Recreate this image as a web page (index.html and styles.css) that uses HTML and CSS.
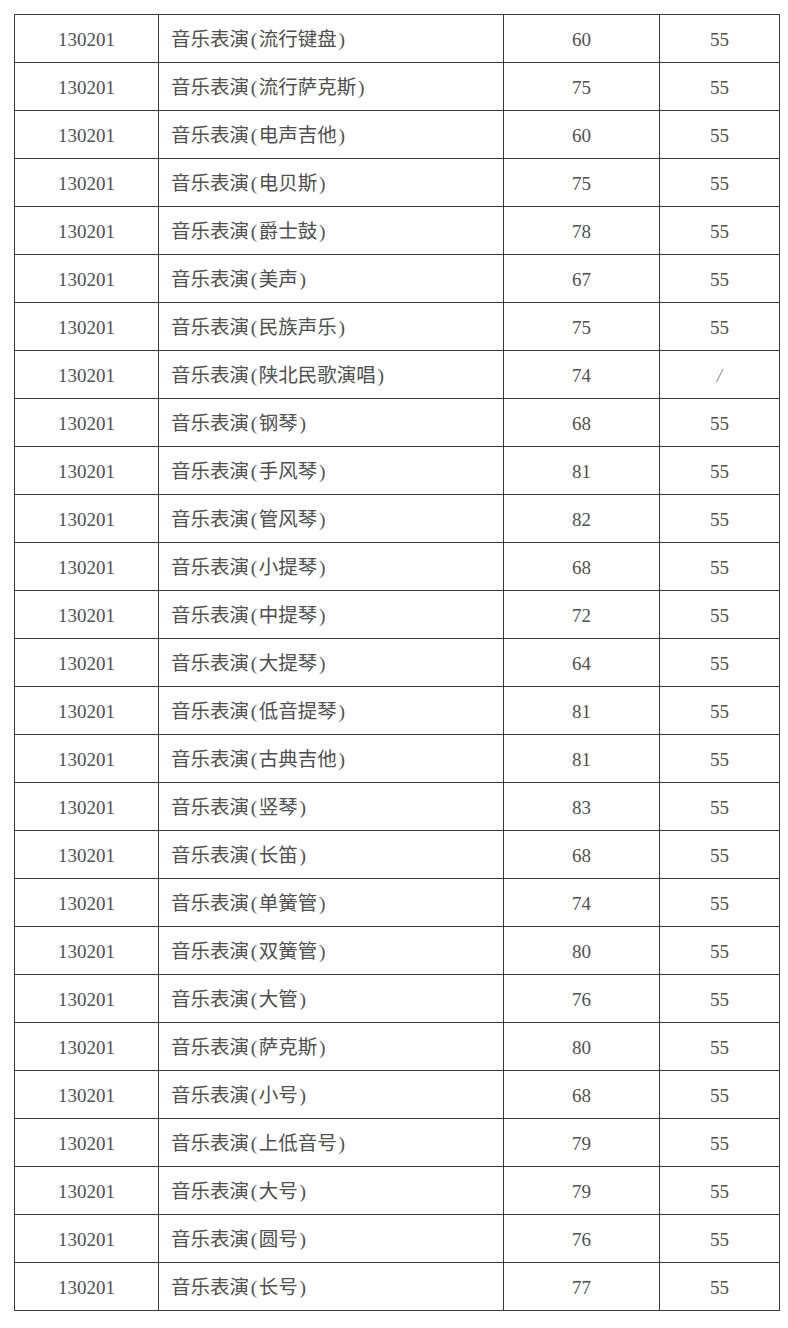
FILE: index.html
```html
<!DOCTYPE html>
<html lang="zh-CN">
<head>
<meta charset="utf-8">
<title>音乐表演</title>
<link rel="stylesheet" href="styles.css">
</head>
<body>
<table class="score-table">
<colgroup>
<col class="c-code"><col class="c-name"><col class="c-a"><col class="c-b">
</colgroup>
<tbody>
<tr><td class="code">130201</td><td class="name">音乐表演<span class="p">(</span>流行键盘<span class="p">)</span></td><td class="num">60</td><td class="num">55</td></tr>
<tr><td class="code">130201</td><td class="name">音乐表演<span class="p">(</span>流行萨克斯<span class="p">)</span></td><td class="num">75</td><td class="num">55</td></tr>
<tr><td class="code">130201</td><td class="name">音乐表演<span class="p">(</span>电声吉他<span class="p">)</span></td><td class="num">60</td><td class="num">55</td></tr>
<tr><td class="code">130201</td><td class="name">音乐表演<span class="p">(</span>电贝斯<span class="p">)</span></td><td class="num">75</td><td class="num">55</td></tr>
<tr><td class="code">130201</td><td class="name">音乐表演<span class="p">(</span>爵士鼓<span class="p">)</span></td><td class="num">78</td><td class="num">55</td></tr>
<tr><td class="code">130201</td><td class="name">音乐表演<span class="p">(</span>美声<span class="p">)</span></td><td class="num">67</td><td class="num">55</td></tr>
<tr><td class="code">130201</td><td class="name">音乐表演<span class="p">(</span>民族声乐<span class="p">)</span></td><td class="num">75</td><td class="num">55</td></tr>
<tr><td class="code">130201</td><td class="name">音乐表演<span class="p">(</span>陕北民歌演唱<span class="p">)</span></td><td class="num">74</td><td class="num slash">/</td></tr>
<tr><td class="code">130201</td><td class="name">音乐表演<span class="p">(</span>钢琴<span class="p">)</span></td><td class="num">68</td><td class="num">55</td></tr>
<tr><td class="code">130201</td><td class="name">音乐表演<span class="p">(</span>手风琴<span class="p">)</span></td><td class="num">81</td><td class="num">55</td></tr>
<tr><td class="code">130201</td><td class="name">音乐表演<span class="p">(</span>管风琴<span class="p">)</span></td><td class="num">82</td><td class="num">55</td></tr>
<tr><td class="code">130201</td><td class="name">音乐表演<span class="p">(</span>小提琴<span class="p">)</span></td><td class="num">68</td><td class="num">55</td></tr>
<tr><td class="code">130201</td><td class="name">音乐表演<span class="p">(</span>中提琴<span class="p">)</span></td><td class="num">72</td><td class="num">55</td></tr>
<tr><td class="code">130201</td><td class="name">音乐表演<span class="p">(</span>大提琴<span class="p">)</span></td><td class="num">64</td><td class="num">55</td></tr>
<tr><td class="code">130201</td><td class="name">音乐表演<span class="p">(</span>低音提琴<span class="p">)</span></td><td class="num">81</td><td class="num">55</td></tr>
<tr><td class="code">130201</td><td class="name">音乐表演<span class="p">(</span>古典吉他<span class="p">)</span></td><td class="num">81</td><td class="num">55</td></tr>
<tr><td class="code">130201</td><td class="name">音乐表演<span class="p">(</span>竖琴<span class="p">)</span></td><td class="num">83</td><td class="num">55</td></tr>
<tr><td class="code">130201</td><td class="name">音乐表演<span class="p">(</span>长笛<span class="p">)</span></td><td class="num">68</td><td class="num">55</td></tr>
<tr><td class="code">130201</td><td class="name">音乐表演<span class="p">(</span>单簧管<span class="p">)</span></td><td class="num">74</td><td class="num">55</td></tr>
<tr><td class="code">130201</td><td class="name">音乐表演<span class="p">(</span>双簧管<span class="p">)</span></td><td class="num">80</td><td class="num">55</td></tr>
<tr><td class="code">130201</td><td class="name">音乐表演<span class="p">(</span>大管<span class="p">)</span></td><td class="num">76</td><td class="num">55</td></tr>
<tr><td class="code">130201</td><td class="name">音乐表演<span class="p">(</span>萨克斯<span class="p">)</span></td><td class="num">80</td><td class="num">55</td></tr>
<tr><td class="code">130201</td><td class="name">音乐表演<span class="p">(</span>小号<span class="p">)</span></td><td class="num">68</td><td class="num">55</td></tr>
<tr><td class="code">130201</td><td class="name">音乐表演<span class="p">(</span>上低音号<span class="p">)</span></td><td class="num">79</td><td class="num">55</td></tr>
<tr><td class="code">130201</td><td class="name">音乐表演<span class="p">(</span>大号<span class="p">)</span></td><td class="num">79</td><td class="num">55</td></tr>
<tr><td class="code">130201</td><td class="name">音乐表演<span class="p">(</span>圆号<span class="p">)</span></td><td class="num">76</td><td class="num">55</td></tr>
<tr><td class="code">130201</td><td class="name">音乐表演<span class="p">(</span>长号<span class="p">)</span></td><td class="num">77</td><td class="num">55</td></tr>
</tbody>
</table>
</body>
</html>
```
FILE: styles.css
```css
html, body {
  margin: 0;
  padding: 0;
  background: #ffffff;
}
body {
  padding: 14px 0 0 14px;
  font-family: "Liberation Serif", "Noto Sans CJK SC", serif;
  font-size: 19px;
  color: #505050;
}
.score-table {
  border-collapse: collapse;
  table-layout: fixed;
  width: 765px;
}
.c-code { width: 144px; }
.c-name { width: 345px; }
.c-a { width: 156px; }
.c-b { width: 120px; }
.score-table tr {
  height: 48px;
}
.score-table td {
  border: 1px solid #3a3a3a;
  padding: 3px 0 0 0;
  vertical-align: middle;
  line-height: 22px;
  white-space: nowrap;
}
.code, .num {
  text-align: center;
}
.name {
  padding-left: 12px !important;
  font-size: 19.5px;
}
.p {
  display: inline-block;
  width: 0.5em;
  text-align: center;
}
.slash {
  color: #8a8a8a;
  font-style: italic;
}
```
